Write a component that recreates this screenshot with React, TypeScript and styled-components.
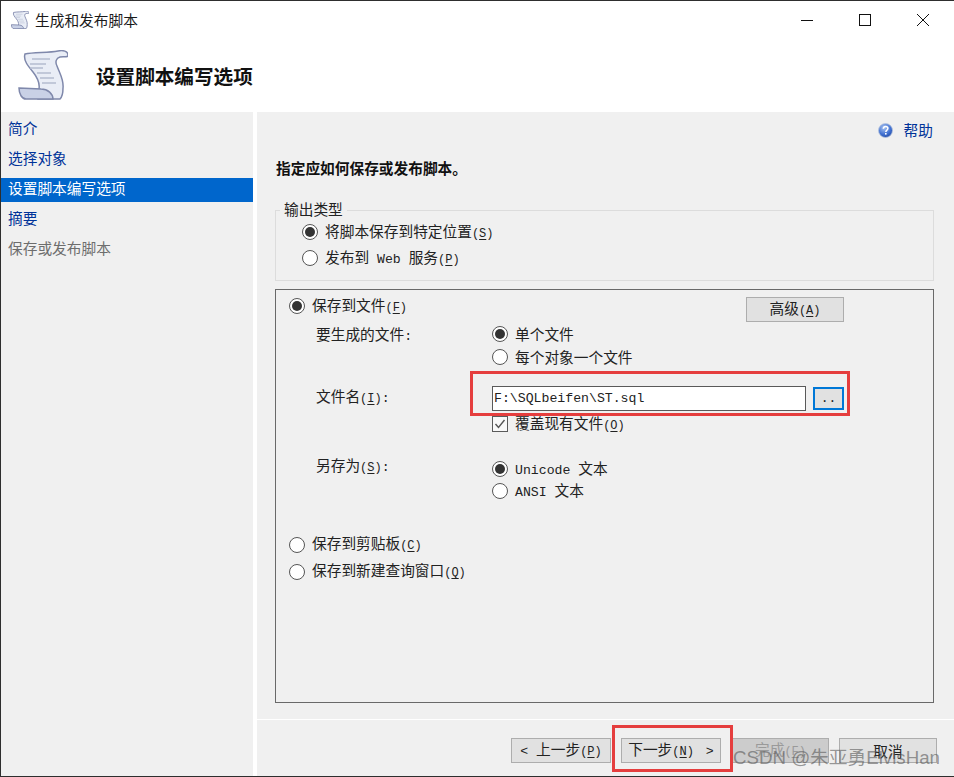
import React from "react"
import styled, { createGlobalStyle } from "styled-components"

const GlobalStyle = createGlobalStyle`
    html, body {
        margin: 0;
        padding: 0;
        background: #f0f0f0;
    }
    * {
        box-sizing: border-box;
    }
`

const Window = styled.div`
    position: relative;
    display: flex;
    flex-direction: column;
    width: 954px;
    height: 777px;
    overflow: hidden;
    border-top: 1px solid #2e2e2e;
    border-left: 1px solid #2e2e2e;
    border-bottom: 1px solid #2e2e2e;
    background: #f0f0f0;
    color: #222;
    font-family: "Noto Sans CJK SC", "Liberation Sans", sans-serif;
    font-size: 14.7px;
    line-height: 20px;
`

const Top = styled.header`
    height: 111px;
    background: #fff;
    flex: none;
`

const TitleBar = styled.div`
    display: flex;
    align-items: center;
    height: 37px;
    padding-left: 10px;
    gap: 6px;
    color: #1a1a1a;
`

const WindowButtons = styled.div`
    display: flex;
    align-items: center;
    margin-left: auto;
    padding-right: 25px;
    gap: 46px;
`

const Banner = styled.div`
    display: flex;
    align-items: flex-start;
    height: 74px;
    padding: 12px 0 0 17px;
`

const BannerTitle = styled.h1`
    margin: 13px 0 0 28px;
    font-size: 19.6px;
    line-height: 26px;
    font-weight: 700;
    color: #111;
`

const Body = styled.div`
    display: flex;
    flex: 1;
    min-height: 0;
`

const Sidebar = styled.nav`
    display: flex;
    flex-direction: column;
    flex: none;
    gap: 6px;
    width: 256px;
    padding-top: 6px;
    border-right: 4px solid #fff;
    background: #f0f0f0;
`

const NavItem = styled.div<{ $state?: "active" | "disabled" }>`
    height: 24px;
    padding-left: 7px;
    line-height: 20px;
    color: ${(p) => (p.$state === "active" ? "#fff" : p.$state === "disabled" ? "#6d6d6d" : "#003399")};
    background: ${(p) => (p.$state === "active" ? "#0066cc" : "transparent")};
`

const Content = styled.main`
    display: flex;
    flex-direction: column;
    flex: 1;
    min-width: 0;
`

const Main = styled.div`
    flex: 1;
    padding: 0 20px 0 18px;
`

const HelpRow = styled.div`
    display: flex;
    align-items: center;
    justify-content: flex-end;
    gap: 11px;
    height: 20px;
    margin-top: 8px;
    padding-right: 1px;
    color: #003399;
`

const Heading = styled.h2`
    margin: 18px 0 0 1px;
    font-size: 14.7px;
    line-height: 20px;
    font-weight: 700;
    color: #111;
`

const Group = styled.section`
    position: relative;
    height: 71px;
    margin-top: 32px;
    padding: 8px 0 0 26px;
    border: 1px solid #dcdcdc;
`

const Legend = styled.span`
    position: absolute;
    top: -12px;
    left: 4px;
    padding: 0 4px;
    background: #f0f0f0;
`

const Panel = styled.section`
    height: 414px;
    margin-top: 8px;
    border: 1px solid #696969;
`

const PanelTop = styled.div`
    display: flex;
    justify-content: space-between;
    align-items: flex-start;
    height: 25px;
    margin-top: 7px;
    padding: 0 89px 0 13px;
`

const Form = styled.div`
    display: grid;
    grid-template-columns: 176px 1fr;
    padding-left: 40px;
`

const FormLabel = styled.div<{ $offset: number }>`
    margin-top: ${(p) => p.$offset}px;
    white-space: pre;
`

const Stack = styled.div<{ $top?: number }>`
    display: flex;
    flex-direction: column;
    margin-top: ${(p) => p.$top ?? 0}px;
`

const Option = styled.div<{ $height: number }>`
    display: flex;
    align-items: center;
    gap: 7px;
    height: ${(p) => p.$height}px;
    white-space: pre;
`

const RadioMark = styled.span<{ $checked?: boolean }>`
    position: relative;
    flex: none;
    width: 16px;
    height: 16px;
    border: 1px solid #555;
    border-radius: 50%;
    background: #fff;

    &::after {
        content: "";
        display: ${(p) => (p.$checked ? "block" : "none")};
        position: absolute;
        top: 2px;
        left: 2px;
        width: 10px;
        height: 10px;
        border-radius: 50%;
        background: #333;
    }
`

const CheckMark = styled.span`
    display: flex;
    align-items: center;
    justify-content: center;
    flex: none;
    width: 16px;
    height: 16px;
    border: 1px solid #5a5a5a;
    background: #f8f8f8;
`

const Latin = styled.span`
    font-family: "Liberation Mono", monospace;
    font-size: 13.2px;
`

const NextArrow = styled(Latin)`
    margin-left: 4px;
`

const Hotkey = styled.span`
    font-family: "Liberation Mono", monospace;
    font-size: 12px;

    u {
        text-underline-offset: 2px;
    }
`

const FileRow = styled.div`
    display: flex;
    align-items: center;
    gap: 7px;
    margin-top: 18px;
`

const FileInput = styled.input`
    width: 314px;
    height: 25px;
    padding: 0 0 0 1px;
    border: 1px solid #5a5a5a;
    border-radius: 0;
    background: #fff;
    color: #222;
    font-family: "Liberation Mono", monospace;
    font-size: 13.2px;
    outline: none;
`

const BrowseButton = styled.button`
    width: 31px;
    height: 23px;
    padding: 0;
    border: 2px solid #0078d7;
    background: #e1e1e1;
    color: #222;
    font-family: "Liberation Mono", monospace;
    font-size: 13px;
    line-height: 20px;
`

const DialogButton = styled.button<{ $width: number; $disabled?: boolean; $nudge?: number }>`
    display: flex;
    align-items: center;
    justify-content: center;
    flex: none;
    width: ${(p) => p.$width}px;
    height: 25px;
    margin-left: ${(p) => p.$nudge ?? 0}px;
    padding: 0;
    border: 1px solid #adadad;
    border-radius: 0;
    background: ${(p) => (p.$disabled ? "#cccccc" : "#e1e1e1")};
    color: ${(p) => (p.$disabled ? "#9a9a9a" : "#222")};
    font-family: "Noto Sans CJK SC", sans-serif;
    font-size: 14.7px;
    line-height: 20px;
    white-space: pre;
`

const BottomOptions = styled.div`
    margin-top: 29px;
    padding-left: 13px;
`

const Footer = styled.footer`
    display: flex;
    justify-content: flex-end;
    height: 57px;
    padding: 18px 17px 0 0;
    border-top: 1px solid #fff;
`

const FooterGroup = styled.div`
    display: flex;
    gap: 10px;
`

const RedBox = styled.div<{ $x: number; $y: number; $w: number; $h: number }>`
    position: absolute;
    left: ${(p) => p.$x}px;
    top: ${(p) => p.$y}px;
    width: ${(p) => p.$w}px;
    height: ${(p) => p.$h}px;
    border: 3px solid #e53e3e;
    pointer-events: none;
`

const Watermark = styled.div`
    position: absolute;
    left: 732px;
    top: 746px;
    font-family: "Liberation Sans", "Noto Sans CJK SC", sans-serif;
    font-size: 18.7px;
    line-height: 22px;
    color: rgba(90, 90, 90, 0.62);
    white-space: nowrap;
`

function ScrollIcon({ size }: { size: number }) {
    const line = size < 30 ? 2.4 : 1.5
    return (
        <svg width={size} height={size} viewBox="0 0 50 50">
            <path
                d="M7 4 C16 2 30 3 40 1 C45 0 50 1 50 5 C50 8 46 6 42 7 C38 8 37 12 39 16 C42 24 46 30 45 38 C45 43 44 47 42 49 L20 49 L21 39 C22 33 19 27 15 22 C10 16 5 10 7 4 Z"
                fill="#e9edf6"
                stroke="#7f88ab"
                strokeWidth={line}
            />
            <path d="M1 38 L23 39 C30 39 35 44 35 49 L8 49 C4 49 1 44 1 38 Z" fill="#c9d1e6" stroke="#7f88ab" strokeWidth={line} />
            <path d="M14 9 H32 M12 14 H28 M12 18 H25 M19 23 H33 M22 28 H36 M24 33 H38" stroke="#b4bccf" strokeWidth="1.4" fill="none" />
        </svg>
    )
}

function HelpIcon() {
    return (
        <svg width="15" height="15" viewBox="0 0 15 15">
            <defs>
                <radialGradient id="help-fill" cx="0.4" cy="0.3" r="0.8">
                    <stop offset="0" stopColor="#a9c4f2" />
                    <stop offset="0.6" stopColor="#3f6fd0" />
                    <stop offset="1" stopColor="#1f459e" />
                </radialGradient>
            </defs>
            <circle cx="7.5" cy="7.5" r="7" fill="url(#help-fill)" stroke="#b9c6de" strokeWidth="0.8" />
            <path d="M5.3 5.8 C5.4 4.3 6.4 3.6 7.6 3.6 C9 3.6 9.9 4.4 9.9 5.6 C9.9 7.2 7.8 7.2 7.8 9" fill="none" stroke="#fff" strokeWidth="1.5" />
            <rect x="7" y="10" width="1.6" height="1.6" fill="#fff" />
        </svg>
    )
}

function WindowControls() {
    return (
        <WindowButtons>
            <svg width="12" height="12" viewBox="0 0 12 12">
                <path d="M0 6.5 H12" stroke="#111" strokeWidth="1" />
            </svg>
            <svg width="12" height="12" viewBox="0 0 12 12">
                <rect x="0.5" y="0.5" width="11" height="11" fill="none" stroke="#111" strokeWidth="1" />
            </svg>
            <svg width="12" height="12" viewBox="0 0 12 12">
                <path d="M0 0 L12 12 M12 0 L0 12" stroke="#111" strokeWidth="1" />
            </svg>
        </WindowButtons>
    )
}

function Key({ k }: { k: string }) {
    return (
        <Hotkey>
            (<u>{k}</u>)
        </Hotkey>
    )
}

function Radio({ checked, height, children }: { checked?: boolean; height: number; children: React.ReactNode }) {
    return (
        <Option $height={height}>
            <RadioMark $checked={checked} />
            <span>{children}</span>
        </Option>
    )
}

export default function App() {
    return (
        <>
            <GlobalStyle />
            <Window>
                <Top>
                    <TitleBar>
                        <ScrollIcon size={18} />
                        <span>生成和发布脚本</span>
                        <WindowControls />
                    </TitleBar>
                    <Banner>
                        <ScrollIcon size={50} />
                        <BannerTitle>设置脚本编写选项</BannerTitle>
                    </Banner>
                </Top>
                <Body>
                    <Sidebar>
                        <NavItem>简介</NavItem>
                        <NavItem>选择对象</NavItem>
                        <NavItem $state="active">设置脚本编写选项</NavItem>
                        <NavItem>摘要</NavItem>
                        <NavItem $state="disabled">保存或发布脚本</NavItem>
                    </Sidebar>
                    <Content>
                        <Main>
                            <HelpRow>
                                <HelpIcon />
                                <span>帮助</span>
                            </HelpRow>
                            <Heading>指定应如何保存或发布脚本。</Heading>
                            <Group>
                                <Legend>输出类型</Legend>
                                <Radio checked height={26}>
                                    将脚本保存到特定位置<Key k="S" />
                                </Radio>
                                <Radio height={26}>
                                    发布到<Latin> Web </Latin>服务<Key k="P" />
                                </Radio>
                            </Group>
                            <Panel>
                                <PanelTop>
                                    <Radio checked height={18}>
                                        保存到文件<Key k="F" />
                                    </Radio>
                                    <DialogButton $width={98}>
                                        <span>高级<Key k="A" /></span>
                                    </DialogButton>
                                </PanelTop>
                                <Form>
                                    <FormLabel $offset={2}>要生成的文件<Latin>:</Latin></FormLabel>
                                    <Stack>
                                        <Radio checked height={23}>单个文件</Radio>
                                        <Radio height={23}>每个对象一个文件</Radio>
                                    </Stack>
                                    <FormLabel $offset={18}>文件名<Key k="I" /><Latin>:</Latin></FormLabel>
                                    <Stack>
                                        <FileRow>
                                            <FileInput readOnly value="F:\SQLbeifen\ST.sql" />
                                            <BrowseButton>..</BrowseButton>
                                        </FileRow>
                                        <Stack $top={2}>
                                            <Option $height={22}>
                                                <CheckMark>
                                                    <svg width="12" height="12" viewBox="0 0 12 12">
                                                        <path d="M1.5 6 L4.5 9.5 L10.5 2" fill="none" stroke="#555" strokeWidth="1.4" />
                                                    </svg>
                                                </CheckMark>
                                                <span>覆盖现有文件<Key k="O" /></span>
                                            </Option>
                                        </Stack>
                                    </Stack>
                                    <FormLabel $offset={20}>另存为<Key k="S" /><Latin>:</Latin></FormLabel>
                                    <Stack $top={23}>
                                        <Radio checked height={22}>
                                            <Latin>Unicode </Latin>文本
                                        </Radio>
                                        <Radio height={22}>
                                            <Latin>ANSI </Latin>文本
                                        </Radio>
                                    </Stack>
                                </Form>
                                <BottomOptions>
                                    <Radio height={27}>保存到剪贴板<Key k="C" /></Radio>
                                    <Radio height={27}>保存到新建查询窗口<Key k="Q" /></Radio>
                                </BottomOptions>
                            </Panel>
                        </Main>
                        <Footer>
                            <FooterGroup>
                                <DialogButton $width={100}>
                                    <span><Latin>&lt; </Latin>上一步<Key k="P" /></span>
                                </DialogButton>
                                <DialogButton $width={100}>
                                    <span>下一步<Key k="N" /><NextArrow> &gt;</NextArrow></span>
                                </DialogButton>
                                <DialogButton $width={97} $disabled $nudge={1}>
                                    <span>完成<Key k="F" /></span>
                                </DialogButton>
                                <DialogButton $width={98}>取消</DialogButton>
                            </FooterGroup>
                        </Footer>
                    </Content>
                </Body>
                <RedBox $x={469} $y={370} $w={380} $h={45} />
                <RedBox $x={611} $y={724} $w={121} $h={47} />
                <Watermark>CSDN @朱亚勇ElvisHan</Watermark>
            </Window>
        </>
    )
}
